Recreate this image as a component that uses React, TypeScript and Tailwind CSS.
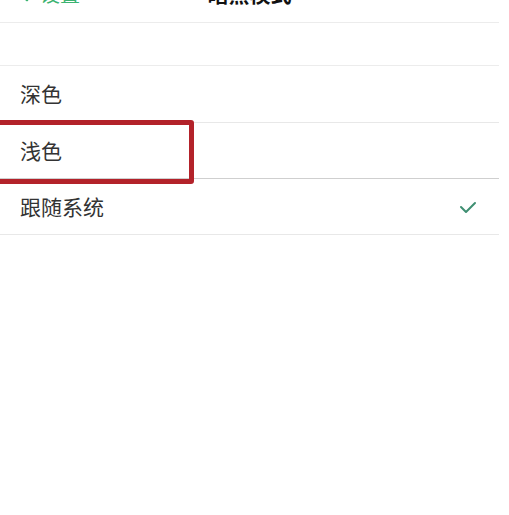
import { ChevronLeft } from 'lucide-react'

const font = { fontFamily: '"Noto Sans CJK SC", "Noto Sans", sans-serif' }

function Row({ label, checked, border, h }: { label: string; checked?: boolean; border: string; h: string }) {
  return (
    <div className={`flex items-center justify-between ${h} pl-5 pr-5 border-b ${border}`}>
      <span className="text-[21px] text-[#333333]">{label}</span>
      {checked && (
        <svg width="18" height="14" viewBox="0 0 18 14" className="mr-[2px]">
          <polyline points="2,7 7,12 16,3" fill="none" stroke="#3f8f72" strokeWidth="2" strokeLinecap="round" strokeLinejoin="round" />
        </svg>
      )}
    </div>
  )
}

export default function App() {
  return (
    <div className="w-[509px] h-[515px] overflow-hidden bg-white" style={font}>
      <div className="w-[499px]">
        {/* Header, mostly cropped off the top */}
        <div className="-mt-[34px] h-[57px] relative flex items-center border-b border-[#ececec]">
          <div className="flex items-center pl-3 text-[#3cb371]">
            <ChevronLeft className="w-6 h-6" strokeWidth={2.5} />
            <span className="text-[20px] ml-1">设置</span>
          </div>
          <span className="absolute left-1/2 -translate-x-1/2 text-[21px] font-bold text-[#111]">暗黑模式</span>
        </div>

        <div className="h-[43px] border-b border-[#ececec]" />

        <Row label="深色" h="h-[57px]" border="border-[#e8e8e8]" />
        <div className="relative">
          <Row label="浅色" h="h-[56px]" border="border-[#cfcfcf]" />
          <div className="absolute left-[-6px] top-[-3px] w-[200px] h-[64px] border-[5px] border-[#b3222a] rounded-[3px]" />
        </div>
        <Row label="跟随系统" checked h="h-[56px]" border="border-[#e8e8e8]" />
      </div>
    </div>
  )
}
